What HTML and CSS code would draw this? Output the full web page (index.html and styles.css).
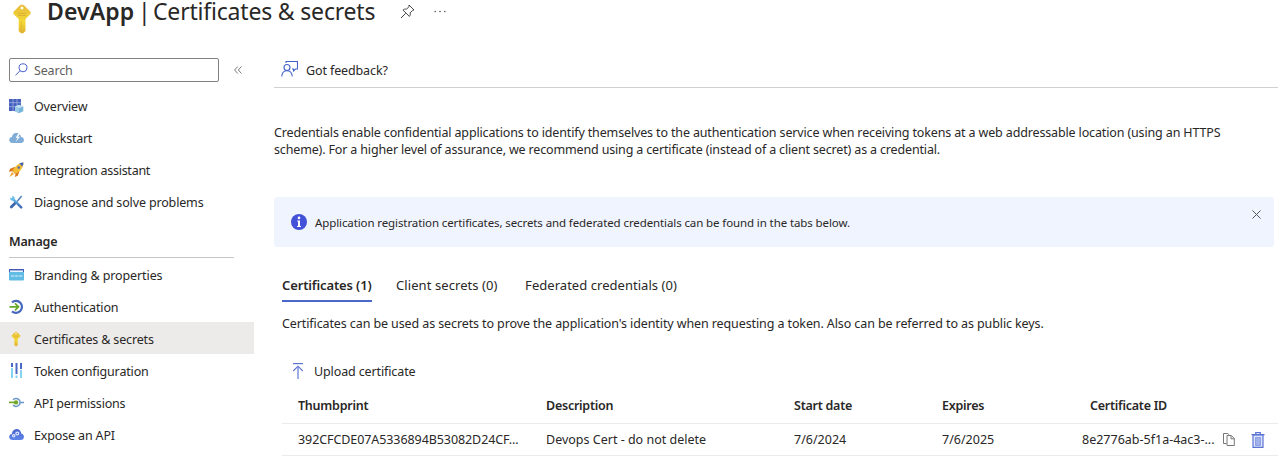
FILE: index.html
```
<!DOCTYPE html>
<html lang="en">
<head>
<meta charset="utf-8">
<title>DevApp | Certificates &amp; secrets</title>
<link rel="stylesheet" href="styles.css">
</head>
<body>
<svg class="defs" width="0" height="0">
  <defs>
    <linearGradient id="gold" x1="0" y1="0" x2="0" y2="1"><stop offset="0" stop-color="#e8bb3c"/><stop offset=".6" stop-color="#f3d936"/><stop offset="1" stop-color="#e0b030"/></linearGradient>
    <linearGradient id="cloudBlue" x1="0" y1="0" x2="0" y2="1"><stop offset="0" stop-color="#4a63cc"/><stop offset="1" stop-color="#6086e8"/></linearGradient>
    <linearGradient id="tool" x1="0" y1="0" x2="0" y2="1"><stop offset="0" stop-color="#69bde8"/><stop offset="1" stop-color="#3f68b4"/></linearGradient>
    <symbol id="key" viewBox="0 0 18 30">
      <path d="M9 .7c1.200 0 2 .4 2.800 1.200l5.200 5.300c1 1 1 2.300 0 3.300l-4.500 4.500v12l-2.400 2.300H8L5.700 27V15L1 10.500c-1-1-1-2.300 0-3.300l5.200-5.300C7 1.100 7.800.7 9 .7z" fill="url(#gold)"/>
      <circle cx="9" cy="4" r="1.500" fill="#fffbe8"/>
      <path d="M5 9.500h8M5 11.500h8" stroke="#d6ac34" stroke-width=".8"/>
      <path d="M8.200 17v10" stroke="#e2b934" stroke-width=".9"/>
    </symbol>
  </defs>
</svg>
<header class="header">
  <svg class="header-key" width="18" height="30"><use href="#key"/></svg>
  <h1 class="title"><b>DevApp</b><span class="bar">|</span><span class="subtitle">Certificates &amp; secrets</span></h1>
  <svg class="pin" width="15" height="15" viewBox="0 0 15 15" fill="none" stroke="#444" stroke-width="1"><path d="M9 1l5 5-1.300.3-2.600 2.600c.5 1.500.1 2.500-.8 3.500L3 6.100c1-1 2.200-1.300 3.400-.8l2.500-2.600zM5.700 9.300L1 14"/></svg>
  <svg class="dots" width="12" height="3" viewBox="0 0 12 3" fill="#555"><circle cx="1.200" cy="1.500" r=".8"/><circle cx="6" cy="1.500" r=".8"/><circle cx="10.800" cy="1.500" r=".8"/></svg>
</header>
<div class="layout">
  <nav class="sidebar">
    <div class="search-row">
      <div class="search">
        <svg width="13" height="13" viewBox="0 0 13 13" fill="none" stroke="#4a62cc"><circle cx="8" cy="4.800" r="4"/><path d="M5 7.700L.5 12.400"/></svg>
        <span class="t-search">Search</span>
      </div>
      <svg class="collapse" width="8" height="8" viewBox="0 0 8 8" fill="none" stroke="#666" stroke-width=".9"><path d="M3.800.5L.6 4l3.200 3.500M7.500.5L4.300 4l3.200 3.500"/></svg>
    </div>
    <a class="item"><svg width="15" height="16" viewBox="0 0 15 16"><path d="M0 1h12v12H0z" fill="#4560bd"/><path d="M0 4.700h12M0 8.700h12M4 1v12M8 1v12" stroke="#a9b8ea" stroke-width=".7"/><path d="M10 6.800l4.300 1.700v4.700L10 15.300l-4-2.100V8.500z" fill="#79b4dc"/><path d="M10 6.800l4.300 1.700L10 10.200 6 8.500z" fill="#c3e1f3"/><path d="M10 10.200v5.100l-4-2.100V8.500z" fill="#9acae8"/></svg><span class="t-overview">Overview</span></a>
    <a class="item"><svg width="15" height="16" viewBox="0 0 15 16"><path d="M3.500 13C-.8 13-.8 7.300 3 7c.3-2.500 2-4.500 4.500-4C10 2.500 11.600 4.600 12 7c4 .2 3.900 6 0 6z" fill="#7fadd8"/><path d="M9.800 2.500L6.700 7.800h1.900L6.600 12 11 6.700H9l2.700-4.200z" fill="#fff"/></svg><span class="t-quick">Quickstart</span></a>
    <a class="item"><svg width="15" height="16" viewBox="0 0 15 16"><path d="M5.500 5L1 6.800 0 9.800l3.500-.6 3 3L5.800 15l3-1.200 1.700-4.600z" fill="#d97821"/><path d="M14.500.5C10 1 6.500 3.500 3.500 8.800l3 3C11.500 9.300 14.300 6 14.500.500z" fill="#f5bd35"/><path d="M14.500.5c-1.600.1-3 .5-4.200 1.100l3 3c.7-1.300 1.100-2.600 1.200-4.100z" fill="#4365ba"/><circle cx="9.800" cy="5.600" r="1.300" fill="#526fb0"/><path d="M3 10l2 2-4.500 3z" fill="#efa52d"/></svg><span class="t-integration">Integration assistant</span></a>
    <a class="item"><svg width="15" height="16" viewBox="0 0 15 16" fill="none"><path d="M12.700 2L8 7.500" stroke="#4d80b8" stroke-width="1.400"/><path d="M6.800 8.500l-4.500 4.500" stroke="#3d69aa" stroke-width="2.800" stroke-linecap="round"/><path d="M3.600 4.700l8.600 8.700" stroke="url(#tool)" stroke-width="2.500" stroke-linecap="round"/><path d="M1 3.500c0 3 2.200 3.800 4.200 2.700 1.200-2 .3-4.200-2.600-4.400l1.300 1.500-.9 1.300z" fill="#69bde8"/></svg><span class="t-diagnose">Diagnose and solve problems</span></a>
    <h2 class="group"><span class="t-manage">Manage</span></h2>
    <a class="item"><svg width="15" height="16" viewBox="0 0 15 16"><path d="M0 2h15v10.500a1 1 0 0 1-1 1H1a1 1 0 0 1-1-1z" fill="#62bbe2"/><path d="M0 5V2.800Q0 2 1 2h13q1 0 1 .8V5z" fill="#4059b3"/><path d="M1 3.400h13V5H1z" fill="#e9f2ff"/><path d="M2 8l.8 2 .8-2 .8 2 .8-2m1 0l.8 2 .7-2 .7 2 .8-2m1 0l.8 2 .7-2 .7 2 .8-2" fill="none" stroke="#c4eafa" stroke-width=".6"/></svg><span class="t-branding">Branding &amp; properties</span></a>
    <a class="item"><svg width="15" height="16" viewBox="0 0 15 16" fill="none"><path d="M3 3.300A6 6 0 1 1 3 12.300" stroke="#4667bd" stroke-width="2.200"/><path d="M.5 7.800h8.300M6 4.300l3.500 3.500L6 11.300" stroke="#69a82a" stroke-width="1.700"/></svg><span class="t-auth">Authentication</span></a>
    <a class="item selected"><svg width="15" height="16" viewBox="0 0 15 16"><use href="#key" x="2" y=".5" width="10" height="15"/></svg><span class="t-cert">Certificates &amp; secrets</span></a>
    <a class="item"><svg width="15" height="16" viewBox="0 0 15 16"><path d="M2 0h2v4H2zM6.500 0h2v11h-2zM11 0h2v6h-2z" fill="#4a68c5"/><path d="M2 5h2v10H2zM6.500 12.500h2V15h-2zM11 7h2v8h-2z" fill="#82d6f3"/></svg><span class="t-token">Token configuration</span></a>
    <a class="item"><svg width="15" height="16" viewBox="0 0 15 16" fill="none"><path d="M4 4.800a4 4 0 1 1 0 5.200M11 7.400h4" stroke="#6b98cb" stroke-width="1.500"/><path d="M0 7.400h5.500" stroke="#75a829" stroke-width="1.700"/><circle cx="7" cy="7.400" r="2.200" fill="#75a829"/></svg><span class="t-perm">API permissions</span></a>
    <a class="item"><svg width="15" height="16" viewBox="0 0 15 16"><path d="M3.500 13C-.8 13-.8 7.600 2.800 7.100 3.100 4.300 4.800 2 7.600 2c2.600 0 4.300 1.900 4.600 4.500C16 6.900 15.800 13 12 13z" fill="url(#cloudBlue)"/><g fill="none" stroke="#dbe4ff"><circle cx="8.300" cy="6.500" r="1.400" stroke-width="1.300"/><circle cx="4.700" cy="8.800" r="1.200" stroke-width="1.200"/></g></svg><span class="t-expose">Expose an API</span></a>
  </nav>
  <main class="main">
    <div class="toolbar">
      <svg width="17" height="17" viewBox="0 0 17 17" fill="none" stroke="#4563c7" stroke-width="1.100"><path d="M5 3V1.500h11.500V9h-2l-2 2V9H11"/><circle cx="6" cy="7.500" r="3"/><path d="M.7 16.500c.3-3.500 2.300-5.700 5.300-5.700s5 2.200 5.300 5.700"/></svg>
      <span class="t-feedback">Got feedback?</span>
    </div>
    <p class="intro"><span class="t-intro1">Credentials enable confidential applications to identify themselves to the authentication service when receiving tokens at a web addressable location (using an HTTPS</span><br><span class="t-intro2">scheme). For a higher level of assurance, we recommend using a certificate (instead of a client secret) as a credential.</span></p>
    <div class="banner">
      <svg width="16" height="16" viewBox="0 0 16 16"><circle cx="8" cy="8" r="8" fill="#4350d8"/><circle cx="8" cy="3.900" r="1.300" fill="#fff"/><path d="M6.200 6.600H9V12h1v1H6v-1h1V7.600h-.8z" fill="#fff"/></svg>
      <span class="t-banner">Application registration certificates, secrets and federated credentials can be found in the tabs below.</span>
      <svg class="close" width="9" height="9" viewBox="0 0 9 9" stroke="#555" stroke-width="1"><path d="M.5.5l8 8M8.500.5l-8 8"/></svg>
    </div>
    <div class="panel">
      <div class="tabs">
        <div class="tab active"><span class="t-tab1">Certificates (1)</span></div>
        <div class="tab"><span class="t-tab2">Client secrets (0)</span></div>
        <div class="tab tab-last"><span class="t-tab3">Federated credentials (0)</span></div>
      </div>
      <p class="help"><span class="t-help">Certificates can be used as secrets to prove the application's identity when requesting a token. Also can be referred to as public keys.</span></p>
      <div class="upload">
        <svg width="12" height="18" viewBox="0 0 12 18" fill="none" stroke="#5d74d3"><path d="M1 .6h10" stroke-width="1.200"/><path d="M6 3.500v12.500" stroke="#94a5e5" stroke-width="1.800"/><path d="M1.200 8L6 3.200 10.800 8" stroke-width="1.100"/></svg>
        <span class="t-upload">Upload certificate</span>
      </div>
      <div class="row head">
        <span class="t-h1">Thumbprint</span><span class="t-h2">Description</span><span class="t-h3">Start date</span><span class="t-h4">Expires</span><span class="t-h5">Certificate ID</span>
      </div>
      <div class="row">
        <span class="t-c1">392CFCDE07A5336894B53082D24CF...</span><span>Devops Cert - do not delete</span><span>7/6/2024</span><span>7/6/2025</span>
        <div class="id-cell"><span>8e2776ab-5f1a-4ac3-...</span>
          <svg class="copy" width="12" height="13" viewBox="0 0 12 13" fill="none" stroke="#777"><path d="M3.500 10.500h-3V.5h4.300l1.700 1.700"/><path d="M4 2.500h4.300l3 3v7H4zM8 2.700v3.100h3.200"/></svg>
          <svg width="14" height="16" viewBox="0 0 14 16" fill="none" stroke="#5b74d4"><path d="M2 3h10v12.300H2z" fill="#dce3fa" stroke-width="1.200"/><path d="M4.500 5.500h5v8h-5z" fill="#a0b0ea" stroke="#8c9fe5"/><path d="M.5 2.700h13M4.700 2.500V.6h4.600v1.900" stroke-width="1.200"/></svg>
        </div>
      </div>
    </div>
  </main>
</div>
</body>
</html>
```
FILE: styles.css
```
* { box-sizing: border-box; }
body { margin: 0; height: 457px; overflow: hidden; background: #fff; color: #292827; font: 12.5px/18px "Noto Sans", "Open Sans", sans-serif; }
h1, h2, p { margin: 0; font-size: inherit; font-weight: 400; }
svg { flex: none; display: block; }
span { white-space: nowrap; }
.defs { position: absolute; }

.header { height: 50px; display: flex; align-items: flex-start; padding-left: 13px; }
.header-key { margin-top: 4px; }
.title { display: flex; margin-left: 16px; width: 353px; font-size: 23px; line-height: 22px; }
.title b { font-weight: 600; width: 91px; letter-spacing: .1px; }
.bar { width: 15px; }
.subtitle { letter-spacing: -.19px; }
.pin { margin-top: 4px; }
.dots { margin: 10px 0 0 19px; }

.layout { display: flex; }
.sidebar { width: 254px; flex: none; }
.search-row { display: flex; align-items: center; height: 39px; padding: 0 0 0 9px; }
.search { width: 210px; height: 24px; border: 1px solid #848280; border-radius: 2px; display: flex; align-items: center; gap: 6px; padding-left: 5px; color: #605e5c; }
.search span { padding-top: 2px; }
.collapse { margin-left: 15px; }
.item { height: 32px; display: flex; align-items: center; gap: 10px; padding: 1px 0 0 9px; letter-spacing: -.15px; }
.item span { padding-top: 2px; }
.selected { background: #edebe9; }
.group { width: 225px; height: 41px; margin-left: 9px; border-bottom: 1px solid #c8c6c4; padding-top: 16px; font-weight: 600; }
.t-search, .t-manage { letter-spacing: -.17px; }
.t-quick, .t-integration { letter-spacing: -.25px; }
.t-branding { letter-spacing: -.1px; }
.t-perm { letter-spacing: -.2px; }

.main { margin-left: 20px; flex: 1; min-width: 0; }
.toolbar { height: 38px; border-bottom: 1px solid #d2d0ce; display: flex; align-items: center; gap: 8px; padding: 0 0 0 7px; }
.t-feedback { padding-top: 4px; letter-spacing: -.12px; }
.intro { margin-top: 36px; line-height: 17px; letter-spacing: -.142px; }
.t-intro2 { letter-spacing: -.155px; }
.banner { margin: 39px 4px 0 0; height: 50px; border-radius: 3px; background: #f0f4fe; display: flex; align-items: center; gap: 8px; padding: 0 13px 0 17px; font-size: 11.5px; }
.t-banner { padding-top: 2px; letter-spacing: -.105px; }
.close { margin: 0 0 16px auto; }

.panel { padding-left: 8px; }
.tabs { display: flex; gap: 24px; height: 55px; align-items: flex-end; font-size: 13px; }
.tab { height: 26px; border-bottom: 2px solid transparent; }
.tab-last { margin-left: 3.5px; }
.active { width: 90px; border-color: #4a68c9; font-weight: 600; }
.t-tab1 { letter-spacing: -.13px; }
.t-tab2 { letter-spacing: .08px; }
.t-tab3 { letter-spacing: .04px; }
.help { margin-top: 13px; letter-spacing: -.105px; }
.upload { display: flex; align-items: center; gap: 10px; padding-left: 10px; margin-top: 30px; letter-spacing: -.12px; }
.row { display: grid; grid-template-columns: 248px 248px 148px 148px 1fr; align-items: center; padding-left: 16px; height: 32px; border-bottom: 1px solid #edebe9; }
.head { margin-top: 9px; height: 34px; font-weight: 600; padding-bottom: 2px; letter-spacing: -.25px; }
.t-c1 { letter-spacing: -.08px; }
.id-cell { display: flex; align-items: center; margin-left: -8px; }
.id-cell span { width: 141px; }
.copy { margin-right: 16px; }
```
